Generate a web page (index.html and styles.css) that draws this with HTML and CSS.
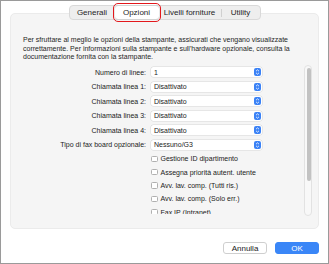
FILE: index.html
```html
<!DOCTYPE html>
<html lang="it">
<head>
    <meta charset="UTF-8">
    <title>Opzioni stampante</title>
    <link rel="stylesheet" href="styles.css">
</head>
<body>
    <div class="window">
        <div class="tabs">
            <span class="tab tab-generali">Generali</span>
            <span class="tab tab-opzioni selected">Opzioni</span>
            <span class="tab tab-livelli">Livelli forniture</span>
            <span class="tab tab-utility">Utility</span>
        </div>

        <div class="group">
            <p class="intro">Per sfruttare al meglio le opzioni della stampante, assicurati che vengano visualizzate correttamente. Per informazioni sulla stampante e sull'hardware opzionale, consulta la documentazione fornita con la stampante.</p>

            <div class="scroll-area">
                <div class="form">
                    <div class="row select-row">
                        <span class="label">Numero di linee:</span>
                        <div class="popup"><span>1</span><i class="stepper"></i></div>
                    </div>
                    <div class="row select-row">
                        <span class="label">Chiamata linea 1:</span>
                        <div class="popup"><span>Disattivato</span><i class="stepper"></i></div>
                    </div>
                    <div class="row select-row">
                        <span class="label">Chiamata linea 2:</span>
                        <div class="popup"><span>Disattivato</span><i class="stepper"></i></div>
                    </div>
                    <div class="row select-row">
                        <span class="label">Chiamata linea 3:</span>
                        <div class="popup"><span>Disattivato</span><i class="stepper"></i></div>
                    </div>
                    <div class="row select-row">
                        <span class="label">Chiamata linea 4:</span>
                        <div class="popup"><span>Disattivato</span><i class="stepper"></i></div>
                    </div>
                    <div class="row select-row">
                        <span class="label">Tipo di fax board opzionale:</span>
                        <div class="popup"><span>Nessuno/G3</span><i class="stepper"></i></div>
                    </div>
                    <div class="row check-row">
                        <span></span>
                        <label class="check"><i class="box"></i>Gestione ID dipartimento</label>
                    </div>
                    <div class="row check-row">
                        <span></span>
                        <label class="check"><i class="box"></i>Assegna priorità autent. utente</label>
                    </div>
                    <div class="row check-row">
                        <span></span>
                        <label class="check"><i class="box"></i>Avv. lav. comp. (Tutti ris.)</label>
                    </div>
                    <div class="row check-row">
                        <span></span>
                        <label class="check"><i class="box"></i>Avv. lav. comp. (Solo err.)</label>
                    </div>
                    <div class="row check-row">
                        <span></span>
                        <label class="check"><i class="box"></i>Fax IP (Intranet)</label>
                    </div>
                </div>
                <div class="scrollbar"><div class="thumb"></div></div>
            </div>
        </div>

        <div class="buttons">
            <button class="btn">Annulla</button>
            <button class="btn primary">OK</button>
        </div>
    </div>
</body>
</html>
```

FILE: styles.css
```css
* {
    box-sizing: border-box;
}

body {
    margin: 0;
    background: #fff;
    font-family: "Liberation Sans", Arial, sans-serif;
    color: #222;
}

.window {
    width: 329px;
    height: 264px;
    border: 1px solid #9a9a9a;
    background: #fff;
    display: flex;
    flex-direction: column;
}

/* segmented tab control */
.tabs {
    position: relative;
    z-index: 2;
    align-self: center;
    margin-top: 4px;
    height: 15px;
    display: flex;
    align-items: center;
    background: #eeeeee;
    border: 1px solid #d9d9d9;
    border-radius: 4px;
    font-size: 8px;
    color: #1e1e1e;
}

.tab {
    height: 100%;
    display: flex;
    align-items: center;
    justify-content: center;
}

.tab-generali { width: 45px; }
.tab-opzioni { width: 44px; }
.tab-livelli { width: 63px; border-right: 1px solid #d0d0d0; height: 8px; }
.tab-utility { width: 38px; }

.tab.selected {
    position: relative;
    background: #fff;
    border-radius: 3px;
    box-shadow: 0 0 1px rgba(0, 0, 0, 0.25);
}

/* red highlight frame */
.tab.selected::after {
    content: '';
    position: absolute;
    left: -2px;
    right: -2px;
    top: -3px;
    bottom: -3px;
    border: 1.5px solid #e3181c;
    border-radius: 5px;
}

.group {
    margin: -7px 9px 0 9px;
    height: 216px;
    background: #f5f5f5;
    border: 1px solid #ebebeb;
    border-radius: 5px;
    padding: 22px 0 0 12px;
}

.intro {
    margin: 0;
    width: 285px;
    font-size: 7px;
    line-height: 8.5px;
    color: #262626;
}

.scroll-area {
    margin-top: 3.5px;
    height: 151px;
    display: flex;
}

.form {
    width: 271px;
    height: 149px;
    overflow: hidden;
    padding-top: 2px;
    display: flex;
    flex-direction: column;
    gap: 4.6px;
}

.row {
    display: grid;
    grid-template-columns: 123px 111px;
    column-gap: 5px;
    align-items: center;
    flex-shrink: 0;
}

.select-row { height: 10px; }
.check-row { height: 8.7px; }

.label {
    text-align: right;
    font-size: 7px;
    color: #222;
}

.popup {
    height: 10px;
    background: #fff;
    border-radius: 2.5px;
    box-shadow: 0 0 0 0.5px rgba(0, 0, 0, 0.12);
    display: flex;
    align-items: center;
    justify-content: space-between;
    padding: 0 1.5px 0 3px;
    font-size: 7px;
    color: #222;
}

.stepper {
    width: 7px;
    height: 8px;
    border-radius: 2px;
    background: #3b82f6 url("data:image/svg+xml,%3Csvg xmlns='http://www.w3.org/2000/svg' viewBox='0 0 7 8'%3E%3Cpath d='M2 3.2L3.5 1.8L5 3.2M2 4.8L3.5 6.2L5 4.8' fill='none' stroke='white' stroke-width='0.8'/%3E%3C/svg%3E") center / 7px 8px no-repeat;
}

.check {
    display: flex;
    align-items: center;
    gap: 3px;
    font-size: 7px;
    color: #222;
    white-space: nowrap;
}

.box {
    width: 6.5px;
    height: 6.5px;
    background: #fff;
    border: 0.7px solid #b0b0b0;
    border-radius: 1.5px;
}

.scrollbar {
    margin-left: 10px;
    width: 8px;
    height: 151px;
    background: #f8f8f8;
    border: 0.7px solid #e2e2e2;
    border-radius: 4px;
    padding: 2px 1.5px;
}

.thumb {
    width: 4px;
    height: 113px;
    margin: 0 auto;
    background: #c2c2c2;
    border-radius: 2px;
}

.buttons {
    margin-top: 13px;
    padding-right: 9px;
    display: flex;
    justify-content: flex-end;
    gap: 8px;
}

.btn {
    width: 44px;
    height: 12px;
    padding: 0;
    font-family: "Liberation Sans", Arial, sans-serif;
    font-size: 8px;
    color: #222;
    background: #fff;
    border: 0.7px solid #cfcfcf;
    border-radius: 3px;
}

.btn.primary {
    background: #3a86f7;
    border-color: #3a86f7;
    color: #fff;
}
```
